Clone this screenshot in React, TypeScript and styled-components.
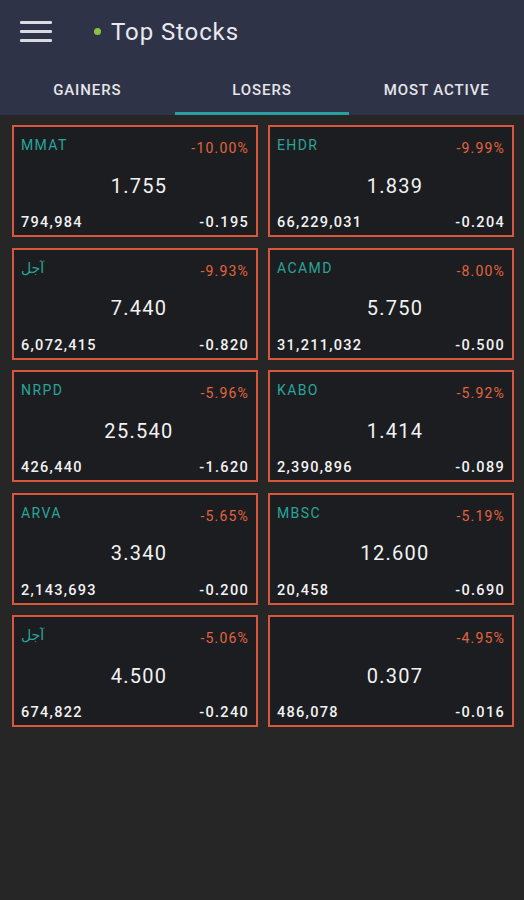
import React from "react";
import styled, { createGlobalStyle } from "styled-components";

const Global = createGlobalStyle`
  html, body { margin: 0; padding: 0; background: #262626; }
  body { font-family: Roboto, "Noto Sans", "DejaVu Sans", sans-serif; }
`;

const Page = styled.div`
  width: 524px;
  min-height: 900px;
  background: #262626;
`;

const Header = styled.header`
  background: #2f3347;
`;

const TopBar = styled.div`
  height: 65px;
  display: flex;
  align-items: center;
  padding-left: 20px;
`;

const Burger = styled.div`
  width: 32px;
  height: 21px;
  display: flex;
  flex-direction: column;
  justify-content: space-between;
  margin-top: -2px;
  span {
    display: block;
    height: 3px;
    border-radius: 1px;
    background: #d9dae2;
  }
`;

const Dot = styled.span`
  width: 7px;
  height: 7px;
  border-radius: 50%;
  background: #86c440;
  margin-left: 42px;
  margin-top: -3px;
`;

const Title = styled.h1`
  margin: -1px 0 0 10px;
  font-size: 24px;
  font-weight: 400;
  letter-spacing: 0.9px;
  color: #e8e9ef;
`;

const Tabs = styled.nav`
  display: grid;
  grid-template-columns: repeat(3, 1fr);
  height: 50px;
`;

const Tab = styled.div<{ $active?: boolean }>`
  display: flex;
  align-items: center;
  justify-content: center;
  font-size: 15px;
  font-weight: 500;
  color: #e4e5ea;
  letter-spacing: 0.9px;
  padding-top: 2px;
  box-sizing: border-box;
  border-bottom: 3px solid ${(p) => (p.$active ? "#2a9ea0" : "transparent")};
`;

const Grid = styled.main`
  display: grid;
  grid-template-columns: 246px 246px;
  column-gap: 10px;
  row-gap: 10.5px;
  padding: 10px 10px 0 12px;
`;

const Card = styled.div`
  height: 112px;
  box-sizing: border-box;
  border: 2px solid #d8573c;
  background: #1c1d21;
  padding: 10px 7px 4px 7px;
  display: flex;
  flex-direction: column;
`;

const Row = styled.div`
  display: flex;
  justify-content: space-between;
  align-items: flex-start;
  height: 16px;
  line-height: 16px;
`;

const Symbol = styled.span`
  font-size: 14px;
  color: #2aa597;
  letter-spacing: 1.4px;
`;

const Pct = styled.span`
  font-size: 14px;
  color: #e2643f;
  margin-top: 3px;
  letter-spacing: 1.2px;
`;

const Price = styled.div`
  flex: 1;
  display: flex;
  align-items: center;
  justify-content: center;
  font-size: 20px;
  letter-spacing: 1.3px;
  color: #f2f2f2;
  padding: 3px 0 0 8px;
`;

const Small = styled.span`
  font-size: 14.5px;
  font-weight: 500;
  color: #f2f2f2;
  letter-spacing: 1.3px;
`;

type Stock = { sym: string; pct: string; price: string; vol: string; chg: string };

const data: Stock[] = [
  { sym: "MMAT", pct: "-10.00%", price: "1.755", vol: "794,984", chg: "-0.195" },
  { sym: "EHDR", pct: "-9.99%", price: "1.839", vol: "66,229,031", chg: "-0.204" },
  { sym: "آجل", pct: "-9.93%", price: "7.440", vol: "6,072,415", chg: "-0.820" },
  { sym: "ACAMD", pct: "-8.00%", price: "5.750", vol: "31,211,032", chg: "-0.500" },
  { sym: "NRPD", pct: "-5.96%", price: "25.540", vol: "426,440", chg: "-1.620" },
  { sym: "KABO", pct: "-5.92%", price: "1.414", vol: "2,390,896", chg: "-0.089" },
  { sym: "ARVA", pct: "-5.65%", price: "3.340", vol: "2,143,693", chg: "-0.200" },
  { sym: "MBSC", pct: "-5.19%", price: "12.600", vol: "20,458", chg: "-0.690" },
  { sym: "آجل", pct: "-5.06%", price: "4.500", vol: "674,822", chg: "-0.240" },
  { sym: "", pct: "-4.95%", price: "0.307", vol: "486,078", chg: "-0.016" },
];

export default function App() {
  return (
    <Page>
      <Global />
      <Header>
        <TopBar>
          <Burger>
            <span />
            <span />
            <span />
          </Burger>
          <Dot />
          <Title>Top Stocks</Title>
        </TopBar>
        <Tabs>
          <Tab>GAINERS</Tab>
          <Tab $active>LOSERS</Tab>
          <Tab>MOST ACTIVE</Tab>
        </Tabs>
      </Header>
      <Grid>
        {data.map((s, i) => (
          <Card key={i}>
            <Row>
              <Symbol>{s.sym}</Symbol>
              <Pct>{s.pct}</Pct>
            </Row>
            <Price>{s.price}</Price>
            <Row>
              <Small>{s.vol}</Small>
              <Small>{s.chg}</Small>
            </Row>
          </Card>
        ))}
      </Grid>
    </Page>
  );
}
